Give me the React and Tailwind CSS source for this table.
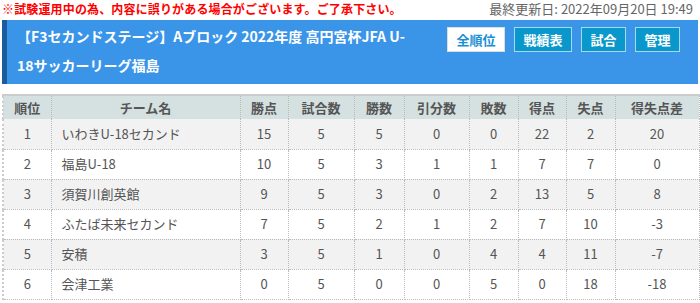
import React from "react";

const rows = [
  ["1", "いわきU-18セカンド", "15", "5", "5", "0", "0", "22", "2", "20"],
  ["2", "福島U-18", "10", "5", "3", "1", "1", "7", "7", "0"],
  ["3", "須賀川創英館", "9", "5", "3", "0", "2", "13", "5", "8"],
  ["4", "ふたば未来セカンド", "7", "5", "2", "1", "2", "7", "10", "-3"],
  ["5", "安積", "3", "5", "1", "0", "4", "4", "11", "-7"],
  ["6", "会津工業", "0", "5", "0", "0", "5", "0", "18", "-18"],
];

const heads = ["順位", "チーム名", "勝点", "試合数", "勝数", "引分数", "敗数", "得点", "失点", "得失点差"];
const widths = [48, 189, 48, 66, 50, 65, 49, 48, 49, 84];

export default function App() {
  return (
    <div
      className="w-[700px] h-[303px] bg-white overflow-hidden px-[2px]"
      style={{ fontFamily: '"Noto Sans CJK JP", "Noto Sans", sans-serif' }}
    >
      <div className="flex justify-between items-start h-[20px]">
        <p className="text-[12px] font-bold text-[#ff0000] leading-[17px] tracking-[0.15px]">
          ※試験運用中の為、内容に誤りがある場合がございます。ご了承下さい。
        </p>
        <p className="text-[13px] text-[#666] leading-[18px] pr-[5px] whitespace-nowrap">
          最終更新日: 2022年09月20日 19:49
        </p>
      </div>
      <div className="flex justify-between bg-[#3a95e9] border-l-[5px] border-[#1b5c9e] pl-[10px] pr-[18px] pt-[2px] pb-[4px]">
        <h1 className="text-white font-bold text-[14px] leading-[29px]">
          【F3セカンドステージ】Aブロック 2022年度 高円宮杯JFA U-
          <br />
          18サッカーリーグ福島
        </h1>
        <div className="flex gap-[9px] pt-[5px] items-start">
          <button className="h-[25px] w-[58px] bg-white border border-[#dddddd] text-[#1a8fd6] text-[13px] font-bold">
            全順位
          </button>
          <button className="h-[25px] w-[58px] bg-[#0a98cc] border border-[#a6d8f0] text-white text-[13px] font-bold">
            戦績表
          </button>
          <button className="h-[25px] w-[45px] bg-[#0a98cc] border border-[#a6d8f0] text-white text-[13px] font-bold">
            試合
          </button>
          <button className="h-[25px] w-[45px] bg-[#0a98cc] border border-[#a6d8f0] text-white text-[13px] font-bold">
            管理
          </button>
        </div>
      </div>
      <table className="mt-[10px] w-[696px] table-fixed border-collapse text-[13px] text-[#555]">
        <colgroup>
          {widths.map((w, i) => (
            <col key={i} style={{ width: w }} />
          ))}
        </colgroup>
        <thead>
          <tr className="h-[24px] bg-[#d5e1e1] border-t-2 border-t-[#cccccc]">
            {heads.map((h, i) => (
              <th
                key={i}
                className={`font-bold text-[#555] text-center p-0 border-r border-dotted border-[#bbbbbb] ${i === 0 ? "border-l-2 border-l-[#cccccc] border-l-solid" : ""}`}
              >
                {h}
              </th>
            ))}
          </tr>
        </thead>
        <tbody>
          {rows.map((r, ri) => (
            <tr key={ri} className={`h-[30px] ${ri % 2 === 0 ? "bg-[#f2f2f2]" : "bg-white"}`}>
              {r.map((c, ci) => (
                <td
                  key={ci}
                  className={`p-0 border-r border-b border-dotted border-[#bbbbbb] ${ci === 1 ? "text-left pl-[10px]" : "text-center"} ${ci === 0 ? "border-l-2 border-l-[#cccccc] border-l-solid" : ""}`}
                >
                  {c}
                </td>
              ))}
            </tr>
          ))}
        </tbody>
      </table>
    </div>
  );
}
